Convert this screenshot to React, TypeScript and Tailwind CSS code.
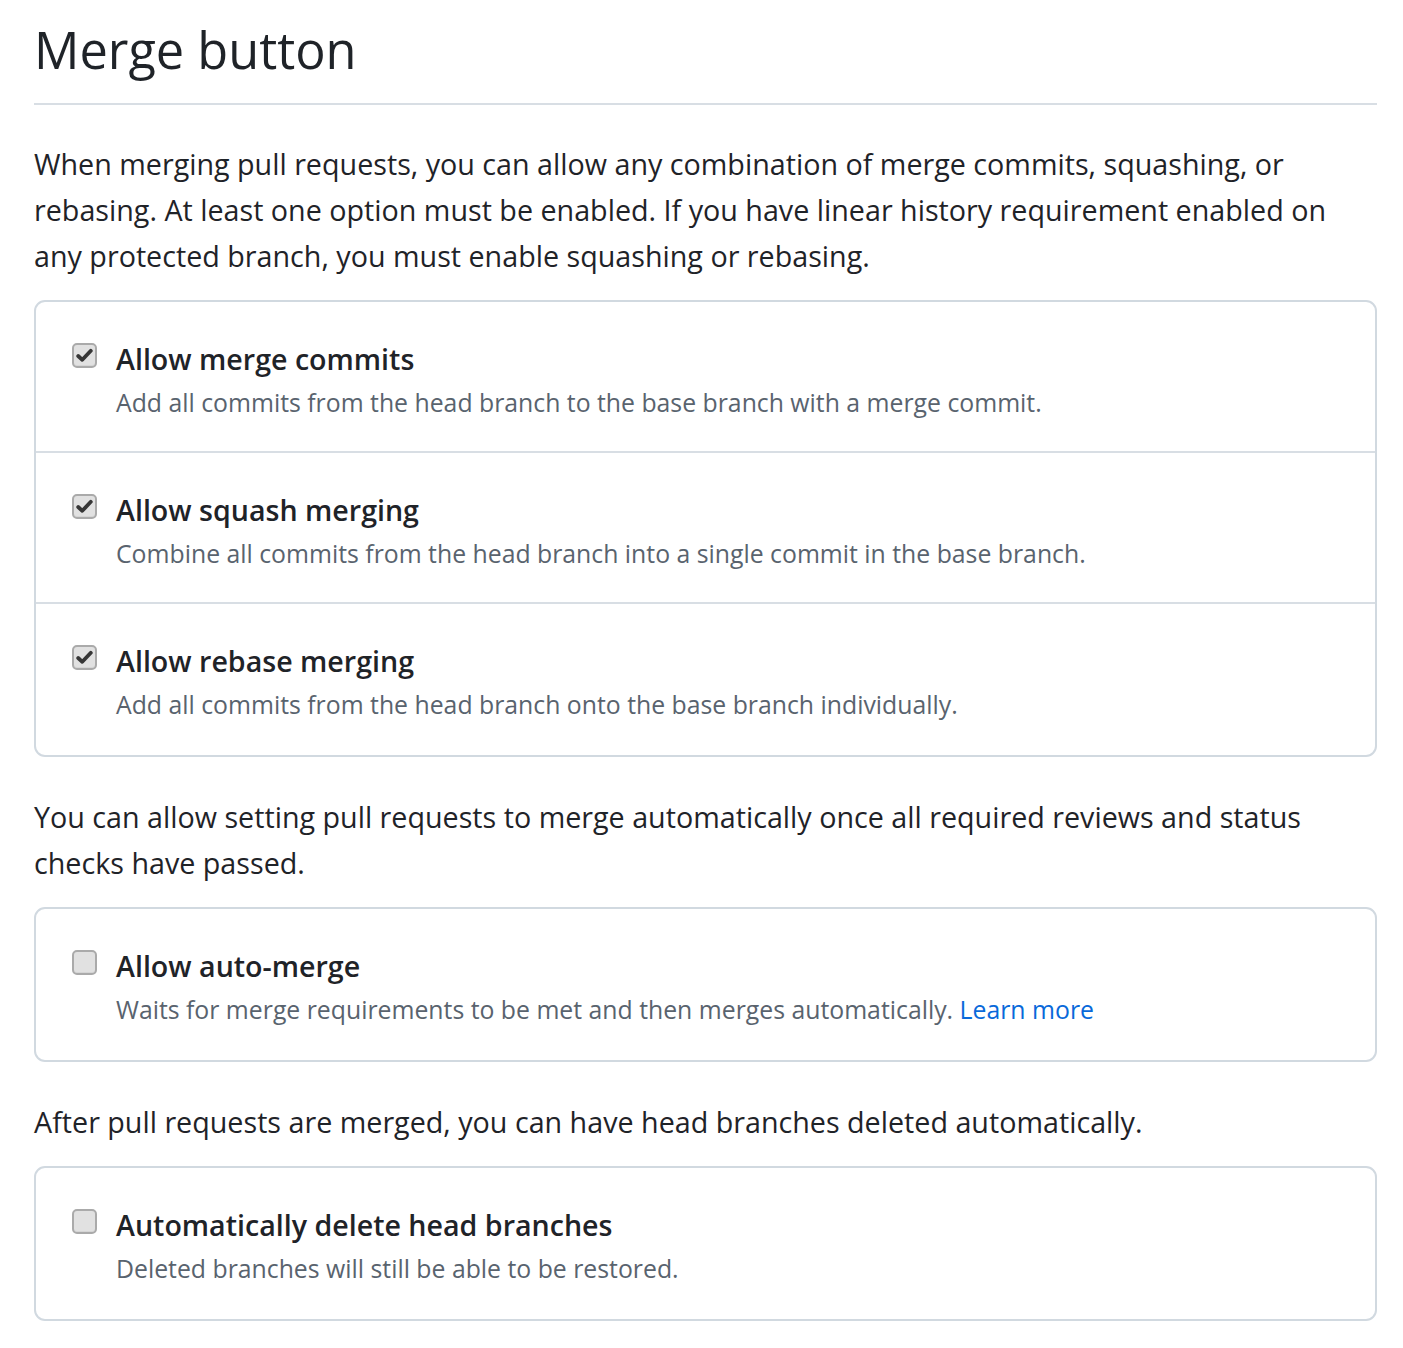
import React from "react";

type Option = {
  title: string;
  description: React.ReactNode;
  checked: boolean;
};

const mergeOptions: Option[] = [
  {
    title: "Allow merge commits",
    description: "Add all commits from the head branch to the base branch with a merge commit.",
    checked: true,
  },
  {
    title: "Allow squash merging",
    description: "Combine all commits from the head branch into a single commit in the base branch.",
    checked: true,
  },
  {
    title: "Allow rebase merging",
    description: "Add all commits from the head branch onto the base branch individually.",
    checked: true,
  },
];

function Checkbox({ checked }: { checked: boolean }) {
  return (
    <span className="mt-[2px] flex h-[25px] w-[25px] shrink-0 items-center justify-center rounded-[5px] border-2 border-[#aaaaaa] bg-[#e1e1e1] shadow-[inset_0_-1px_0_rgba(0,0,0,0.05)]">
      {checked && (
        <svg width="17" height="15" viewBox="0 0 17 15" fill="none">
          <path d="M2.2 8 L6.3 11.8 L14.8 2.8" stroke="#363636" strokeWidth="3.8" strokeLinecap="round" strokeLinejoin="round" />
        </svg>
      )}
    </span>
  );
}

function OptionRow({ option, last }: { option: Option; last: boolean }) {
  return (
    <div className={`flex h-[151px] gap-[19px] px-[36px] pt-[39px] ${last ? "" : "border-b-2 border-[#d8dee4]"}`}>
      <Checkbox checked={option.checked} />
      <div>
        <div className="text-[28.6px] font-semibold leading-[36px] text-[#1f2328]">{option.title}</div>
        <div className="mt-[7px] text-[24.8px] leading-[36px] text-[#59636e]">{option.description}</div>
      </div>
    </div>
  );
}

function Box({ options }: { options: Option[] }) {
  return (
    <div className="rounded-[11px] border-2 border-[#d1d9e0]">
      {options.map((o, i) => (
        <OptionRow key={o.title} option={o} last={i === options.length - 1} />
      ))}
    </div>
  );
}

export default function App() {
  return (
    <div
      className="min-h-screen bg-white pl-[34px] pr-[26px] pt-[14px] pb-10 text-[#1f2328]"
      style={{ fontFamily: '"Open Sans", "Noto Sans", sans-serif' }}
    >
      <h2 className="border-b-2 border-[#d8dee4] pb-[17px] text-[50.5px] font-normal leading-[72px]">Merge button</h2>

      <p className="mt-[36px] text-[28.7px] leading-[46px]">
        When merging pull requests, you can allow any combination of merge commits, squashing, or rebasing. At least one
        option must be enabled. If you have linear history requirement enabled on any protected branch, you must enable
        squashing or rebasing.
      </p>

      <div className="mt-[21px]">
        <Box options={mergeOptions} />
      </div>

      <p className="mt-[37px] text-[28.7px] leading-[46px]">
        You can allow setting pull requests to merge automatically once all required reviews and status checks have passed.
      </p>

      <div className="mt-[21px]">
        <Box
          options={[
            {
              title: "Allow auto-merge",
              description: (
                <>
                  Waits for merge requirements to be met and then merges automatically.{" "}
                  <a href="#" className="text-[#0969da]">
                    Learn more
                  </a>
                </>
              ),
              checked: false,
            },
          ]}
        />
      </div>

      <p className="mt-[37px] text-[28.7px] leading-[46px]">
        After pull requests are merged, you can have head branches deleted automatically.
      </p>

      <div className="mt-[21px]">
        <Box
          options={[
            {
              title: "Automatically delete head branches",
              description: "Deleted branches will still be able to be restored.",
              checked: false,
            },
          ]}
        />
      </div>
    </div>
  );
}
